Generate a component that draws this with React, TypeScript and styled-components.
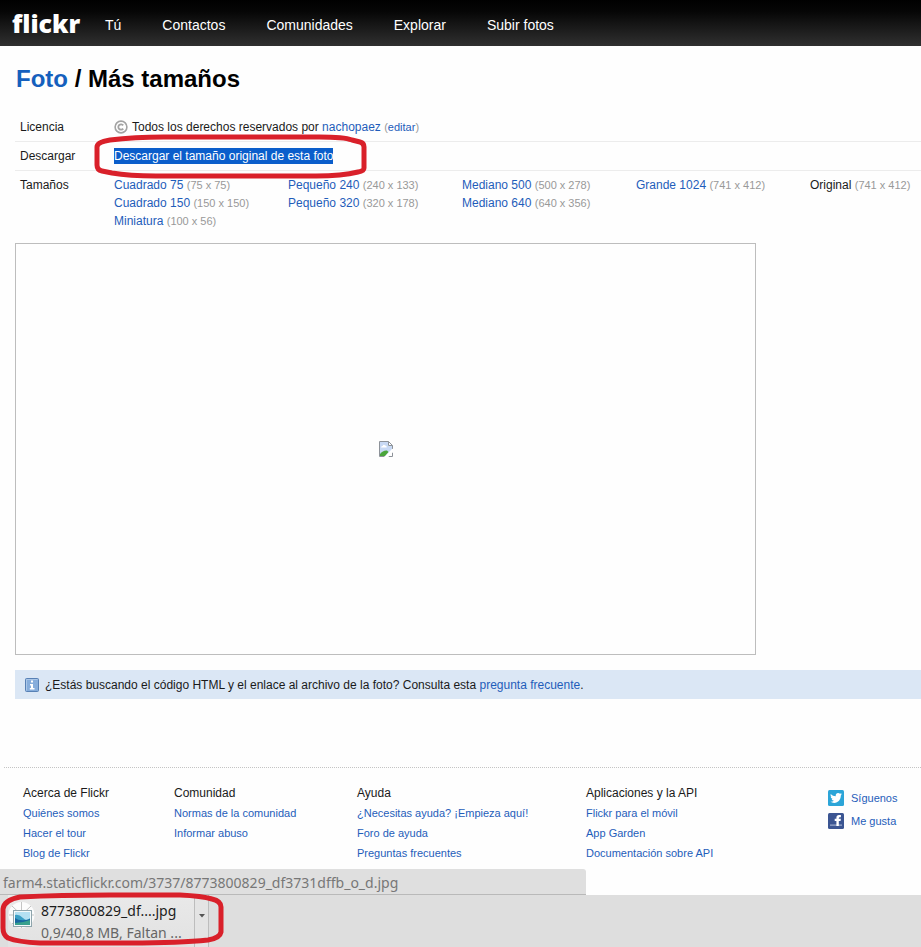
import React from "react";
import styled, { createGlobalStyle } from "styled-components";

const GlobalStyle = createGlobalStyle`
  * { box-sizing: border-box; }
  body {
    margin: 0;
    background: #fefefe;
    color: #1a1a1a;
    font: 12px/18px "Liberation Sans", Arial, sans-serif;
  }
`;

const Page = styled.div`
  display: flex;
  flex-direction: column;
  min-height: 100vh;
  overflow-x: hidden;
`;

const Header = styled.header`
  display: flex;
  align-items: center;
  height: 46px;
  padding: 0 12px;
  background: linear-gradient(#000 0%, #060606 25%, #303030 100%);
`;

const Logo = styled.a`
  width: 93px;
  color: #fff;
  font: 800 25px/44px "Open Sans", "Noto Sans", sans-serif;
  text-decoration: none;
`;

const Nav = styled.nav`
  display: flex;
  gap: 41px;
  padding-top: 4px;
`;

const NavLink = styled.a`
  color: #fff;
  font-size: 14px;
  text-decoration: none;
`;

const Main = styled.main`
  flex: 1;
  padding: 18px 0 0 15px;
`;

const Title = styled.h1`
  margin: 0 0 19px;
  padding-left: 1px;
  color: #000;
  font-size: 24px;
  line-height: 30px;
`;

const Link = styled.a<{ $small?: boolean }>`
  color: #1f5dba;
  font-size: ${(p) => (p.$small ? "11px" : "inherit")};
  text-decoration: none;
`;

const TitleLink = styled(Link)`
  color: #1560bd;
`;

const Details = styled.table`
  width: 100%;
  border-collapse: collapse;
`;

const DetailRow = styled.tr`
  & + & { border-top: 1px solid #ececec; }
`;

const Label = styled.th`
  width: 99px;
  padding: 5px;
  font-weight: normal;
  text-align: left;
  vertical-align: top;
`;

const Value = styled.td`
  padding: 5px 0;
`;

const License = styled.div`
  display: flex;
  align-items: center;
  gap: 4px;
`;

const Muted = styled.small`
  color: #999;
  font-size: 11px;
`;

const DownloadWrap = styled.div`
  position: relative;
`;

const Selected = styled.a`
  background: #0b5ecb;
  color: #fff;
  padding: 1px 0;
  text-decoration: none;
`;

const DownloadMark = styled.svg`
  position: absolute;
  left: -20px;
  top: -13px;
  pointer-events: none;
`;

const Sizes = styled.div`
  display: grid;
  grid-template-columns: repeat(4, minmax(0, 174px)) auto;
`;

const SizeList = styled.ul`
  margin: 0;
  padding: 0;
  list-style: none;
  white-space: nowrap;
`;

const Photo = styled.div`
  display: flex;
  align-items: center;
  justify-content: center;
  max-width: 741px;
  aspect-ratio: 741 / 412;
  margin-top: 8px;
  border: 1px solid #bdbdbd;
`;

const Notice = styled.p`
  display: flex;
  align-items: center;
  gap: 6px;
  min-height: 29px;
  margin: 15px 0 68px;
  padding: 0 10px;
  background: #dbe7f5;
`;

const Footer = styled.footer`
  display: grid;
  grid-template-columns: 151fr 183fr 229fr 242fr 93fr;
  min-height: 128px;
  margin-left: 4px;
  padding: 15px 0 0 19px;
  border-top: 1px dotted #c4c4c4;
`;

const FooterHeading = styled.h2`
  margin: 0;
  font-size: 12px;
  font-weight: normal;
  line-height: 20px;
`;

const FooterList = styled.ul`
  margin: 0;
  padding: 0;
  list-style: none;
  font-size: 11px;
  line-height: 20px;
  white-space: nowrap;
`;

const Social = styled.div`
  display: flex;
  flex-direction: column;
  gap: 7px;
  padding-top: 7px;
`;

const SocialLink = styled(Link)`
  display: flex;
  align-items: center;
  gap: 7px;
  line-height: 16px;
`;

const Shelf = styled.div`
  position: relative;
  display: flex;
  height: 52px;
  padding-left: 8px;
  background: #dedede;
`;

const Status = styled.div`
  position: absolute;
  left: 0;
  bottom: 100%;
  width: 586px;
  max-width: 100%;
  height: 26px;
  padding: 0 3px;
  border-bottom: 1px solid #b9b9b9;
  border-radius: 0 3px 0 0;
  background: #dfdfdf;
  color: #777;
  font: 14px/28px "Noto Sans", "Open Sans", sans-serif;
`;

const Download = styled.button`
  display: flex;
  gap: 6px;
  width: 186px;
  padding: 5px 0 0;
  border: 0;
  background: linear-gradient(#e9e9e9, #e2e2e2);
  color: #1c1c1c;
  font: 14px/22px "Noto Sans", "Open Sans", sans-serif;
  text-align: left;
  white-space: nowrap;
`;

const Progress = styled.span`
  display: block;
  color: #666;
`;

const MenuButton = styled.button`
  width: 15px;
  padding: 0 0 16px;
  border: solid #bdbdbd;
  border-width: 0 1px;
  background: #e4e4e4;
`;

const ShelfMark = styled.svg`
  position: absolute;
  left: 0;
  top: -3px;
  pointer-events: none;
`;

type Size = [name: string, dims: string];

const sizes: Size[][] = [
  [["Cuadrado 75", "75 x 75"], ["Cuadrado 150", "150 x 150"], ["Miniatura", "100 x 56"]],
  [["Pequeño 240", "240 x 133"], ["Pequeño 320", "320 x 178"]],
  [["Mediano 500", "500 x 278"], ["Mediano 640", "640 x 356"]],
  [["Grande 1024", "741 x 412"]],
  [["Original", "741 x 412"]],
];

const footer = [
  { title: "Acerca de Flickr", links: ["Quiénes somos", "Hacer el tour", "Blog de Flickr"] },
  { title: "Comunidad", links: ["Normas de la comunidad", "Informar abuso"] },
  { title: "Ayuda", links: ["¿Necesitas ayuda? ¡Empieza aquí!", "Foro de ayuda", "Preguntas frecuentes"] },
  { title: "Aplicaciones y la API", links: ["Flickr para el móvil", "App Garden", "Documentación sobre API"] },
];

const CopyrightIcon = () => (
  <svg width="14" height="14" viewBox="0 0 14 14" fill="none" stroke="#a3a3a3" aria-hidden="true">
    <circle cx="7" cy="7" r="5.9" strokeWidth="1.6" />
    <path d="M9.2 5.4A2.7 2.7 0 1 0 9.2 8.6" strokeWidth="1.8" />
  </svg>
);

const BrokenImageIcon = () => (
  <svg width="14" height="16" viewBox="0 0 14 16" role="img" aria-label="Foto">
    <path d="M.5.5H9.5L13.5 4.5V15.5H.5Z" fill="#fff" />
    <path d="M1 1H9V5H13V8L6 15H1Z" fill="#c8d9f4" />
    <path d="M2 6.5Q2 4.8 3.7 5Q4.5 3 6.2 4.5Q8 4.5 7.7 6.5Z" fill="#fff" />
    <path d="M1 13Q4 9 8 9.5L9.5 11L6 15H1Z" fill="#4aa53b" />
    <path d="M.5 15.5V.5H9.5L13.5 4.5V8M9.5.5V4.5H13.5M.5 15.5H5.5M9.5 15.5H13.5V11.5" fill="none" stroke="#8d9299" />
    <path d="M14 7.5L5.5 16H9L14 11Z" fill="#fff" />
  </svg>
);

const InfoIcon = () => (
  <svg width="14" height="14" viewBox="0 0 14 14" aria-hidden="true">
    <rect x=".5" y=".5" width="13" height="13" rx="1" fill="#86addb" stroke="#5881b5" />
    <path d="M1.5 12.5V1.5H12.5" fill="none" stroke="#abc7e8" />
    <path d="M6 2.5H8V4.5H6ZM5 6H8V10H9.5V11.5H4.8V10H6V7.4H5Z" fill="#fff" />
  </svg>
);

const TwitterIcon = () => (
  <svg width="16" height="16" viewBox="0 0 16 16" aria-hidden="true">
    <rect width="16" height="16" rx="1.5" fill="#2ca5d8" />
    <path d="M2.8 4C4.2 5.5 5.8 6.2 7.8 6.3C7.3 4.4 8.5 3 10.1 3C10.9 3 11.5 3.3 12 3.8L13.6 3.2L12.9 4.5L14 4.3L12.8 5.6C12.9 9.6 10.2 12.9 6.2 12.9C4.8 12.9 3.5 12.5 2.5 11.8C3.8 11.9 5 11.6 5.9 10.8C4.8 10.7 4 10 3.7 9.1H4.7C3.5 8.7 2.7 7.8 2.7 6.6L3.7 6.9C2.6 6 2.3 5 2.8 4Z" fill="#fff" />
  </svg>
);

const FacebookIcon = () => (
  <svg width="16" height="16" viewBox="0 0 16 16" aria-hidden="true">
    <rect width="16" height="16" rx="1.5" fill="#3b5592" />
    <path d="M2 11.3H14V13H2Z" fill="#8294bd" />
    <path d="M8.4 13V8H6.7V5.8H8.4V4.7C8.4 3 9.4 2.1 11 2.1H12.9V4.3H11.8C11.1 4.3 10.8 4.6 10.8 5.2V5.8H12.9L12.6 8H10.8V13Z" fill="#fff" />
  </svg>
);

const FileIcon = () => (
  <svg width="27" height="32" viewBox="0 0 27 32" aria-hidden="true">
    <circle cx="13.5" cy="15" r="13" fill="#fcfcfc" />
    <path d="M13.5 2V28M1 15H26M4 6L23 24M23 6L4 24" stroke="#c4c4c4" />
    <rect x="5.5" y="10.5" width="18" height="16" fill="#f5fafb" stroke="#8fa5ad" />
    <rect x="7" y="12" width="15" height="13" fill="#b4e0f2" />
    <path d="M7 15Q11 14 15 18T22 18V25H7Z" fill="#3b9fc5" />
    <path d="M7 18Q12 22 22 19V25H7Z" fill="#1767a0" />
    <path d="M7 23Q14 23 22 20V25H7Z" fill="#38a08d" />
  </svg>
);

export default function App() {
  return (
    <Page>
      <GlobalStyle />
      <Header>
        <Logo href="#">flickr</Logo>
        <Nav>
          {["Tú", "Contactos", "Comunidades", "Explorar", "Subir fotos"].map((item) => (
            <NavLink href="#" key={item}>{item}</NavLink>
          ))}
        </Nav>
      </Header>
      <Main>
        <Title><TitleLink href="#">Foto</TitleLink> / Más tamaños</Title>
        <Details>
          <tbody>
            <DetailRow>
              <Label scope="row">Licencia</Label>
              <Value>
                <License>
                  <CopyrightIcon />
                  <span>
                    Todos los derechos reservados por <Link href="#">nachopaez</Link>{" "}
                    <Muted>(<Link href="#">editar</Link>)</Muted>
                  </span>
                </License>
              </Value>
            </DetailRow>
            <DetailRow>
              <Label scope="row">Descargar</Label>
              <Value>
                <DownloadWrap>
                  <Selected href="#">Descargar el tamaño original de esta foto</Selected>
                  <DownloadMark width="274" height="46" viewBox="0 0 274 46" fill="none" stroke="#d9202a" strokeWidth="5" strokeLinejoin="round" aria-hidden="true">
                    <path d="M16 6Q40 3 70 3H225Q250 3 258 6L266 8Q270 9 270 13V34Q270 37 264 38Q248 42 222 42H62Q35 42 18 39L8 37Q3 36 3 31V13Q3 8 16 6Z" />
                  </DownloadMark>
                </DownloadWrap>
              </Value>
            </DetailRow>
            <DetailRow>
              <Label scope="row">Tamaños</Label>
              <Value>
                <Sizes>
                  {sizes.map((group) => (
                    <SizeList key={group[0][0]}>
                      {group.map(([name, dims]) => (
                        <li key={name}>
                          {name === "Original" ? name : <Link href="#">{name}</Link>} <Muted>({dims})</Muted>
                        </li>
                      ))}
                    </SizeList>
                  ))}
                </Sizes>
              </Value>
            </DetailRow>
          </tbody>
        </Details>
        <Photo><BrokenImageIcon /></Photo>
        <Notice>
          <InfoIcon />
          <span>
            ¿Estás buscando el código HTML y el enlace al archivo de la foto? Consulta esta{" "}
            <Link href="#">pregunta frecuente</Link>.
          </span>
        </Notice>
      </Main>
      <Footer>
        {footer.map((column) => (
          <div key={column.title}>
            <FooterHeading>{column.title}</FooterHeading>
            <FooterList>
              {column.links.map((label) => (
                <li key={label}><Link href="#">{label}</Link></li>
              ))}
            </FooterList>
          </div>
        ))}
        <Social>
          <SocialLink href="#" $small><TwitterIcon />Síguenos</SocialLink>
          <SocialLink href="#" $small><FacebookIcon />Me gusta</SocialLink>
        </Social>
      </Footer>
      <Shelf>
        <Status>farm4.staticflickr.com/3737/8773800829_df3731dffb_o_d.jpg</Status>
        <Download>
          <FileIcon />
          <span>
            8773800829_df....jpg
            <Progress>0,9/40,8 MB, Faltan ...</Progress>
          </span>
        </Download>
        <MenuButton aria-label="Opciones de descarga">
          <svg width="6" height="4" viewBox="0 0 6 4" aria-hidden="true"><path d="M0 0H6L3 3.5Z" fill="#555" /></svg>
        </MenuButton>
        <ShelfMark width="226" height="55" viewBox="0 0 226 55" fill="none" stroke="#d9202a" strokeWidth="5" strokeLinejoin="round" aria-hidden="true">
          <path d="M20 5Q60 3 110 3H180Q202 4 212 7Q221 9 221 15V40Q220 46 208 48Q180 51 130 51H40Q18 50 8 46Q3 43 3 36V17Q4 8 20 5Z" />
        </ShelfMark>
      </Shelf>
    </Page>
  );
}
